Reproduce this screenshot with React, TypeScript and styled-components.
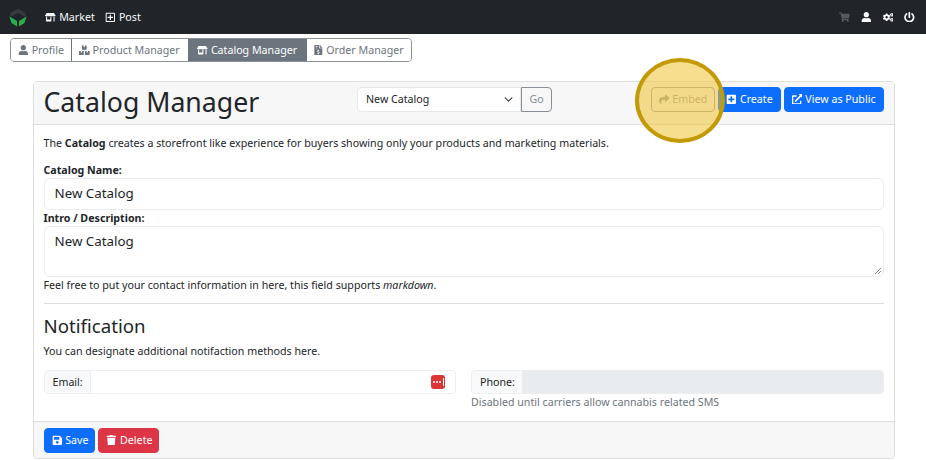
import styled, { createGlobalStyle } from "styled-components";
import {
  FaBoxes,
  FaCogs,
  FaExternalLinkAlt,
  FaFileInvoiceDollar,
  FaPlusSquare,
  FaPowerOff,
  FaRegPlusSquare,
  FaSave,
  FaShare,
  FaShoppingCart,
  FaStoreAlt,
  FaTrash,
  FaUser,
} from "react-icons/fa";

const GlobalStyle = createGlobalStyle`
  * { box-sizing: border-box; }
  html, body { margin: 0; background: #fff; }
  body {
    font-family: "Noto Sans", sans-serif;
    font-size: 10.67px;
    line-height: 16px;
    color: #212529;
  }
  svg.fa { height: 10.67px; width: auto; display: block; flex: none; }
`;

const Page = styled.div`
  width: 926px;
  height: 460px;
  overflow: hidden;
  position: relative;
`;

const NavBar = styled.nav`
  display: flex;
  align-items: center;
  height: 34px;
  background: #212529;
  padding: 0 11px 0 9px;
  color: #f8f9fa;
`;

const NavLink = styled.span`
  display: inline-flex;
  align-items: center;
  gap: 3.5px;
  margin-right: 10px;
`;

const Logo = styled.svg`
  width: 18px;
  height: 19px;
  margin-right: 18px;
`;

const NavRight = styled.div`
  margin-left: auto;
  display: flex;
  align-items: center;
  gap: 11px;
`;

const Tabs = styled.div`
  display: inline-flex;
  margin: 4px 0 0 10px;
  height: 24px;
  border: 1px solid #8a9198;
  border-radius: 4px;
  overflow: hidden;
`;

const Tab = styled.span<{ $active?: boolean }>`
  display: inline-flex;
  align-items: center;
  gap: 3px;
  padding: ${(p) => (p.$active ? "0 8.5px" : "0 8px 0 7px")};
  color: ${(p) => (p.$active ? "#fff" : "#6c757d")};
  background: ${(p) => (p.$active ? "#6c757d" : "#fff")};
  & + & { border-left: 1px solid #6c757d; }
  &:first-child { padding-right: 7px; }
  &:last-child { padding: 0 7px 0 6px; }
`;

const Card = styled.section`
  display: flex;
  flex-direction: column;
  width: 862px;
  height: 378px;
  margin: 19px 0 0 32.5px;
  border: 1px solid #dfdfdf;
  border-radius: 4px;
  overflow: hidden;
`;

const CardHeader = styled.header`
  display: flex;
  align-items: center;
  height: 43px;
  flex: none;
  padding: 0 10px;
  background: #f7f7f7;
  border-bottom: 1px solid #dfdfdf;
`;

const Title = styled.h1`
  margin: -2px 0 0;
  width: 313.5px;
  font-size: 26.67px;
  font-weight: 400;
  line-height: 32px;
  color: #212529;
`;

const CatalogPicker = styled.div`
  display: flex;
  height: 25px;
  margin-top: -8px;
`;

const PickerSelect = styled.div`
  display: flex;
  align-items: center;
  justify-content: space-between;
  width: 164px;
  padding: 0 7px 0 8px;
  background: #fff;
  border: 1px solid #e6e8ea;
  border-radius: 4px 0 0 4px;
  svg { width: 9px; height: 9px; }
`;

const GoButton = styled.span`
  display: flex;
  align-items: center;
  justify-content: center;
  width: 31px;
  border: 1px solid #6c757d;
  border-radius: 0 4px 4px 0;
  color: #6c757d;
  opacity: 0.8;
`;

const HeaderActions = styled.div`
  display: flex;
  gap: 3px;
  margin-left: auto;
  margin-top: -8px;
`;

const Button = styled.span<{ $tone: "primary" | "danger" | "muted" }>`
  display: inline-flex;
  align-items: center;
  gap: 3px;
  height: 25px;
  padding: 0 7px;
  border-radius: 4px;
  border: 1px solid
    ${(p) =>
      p.$tone === "primary" ? "#0d6efd" : p.$tone === "danger" ? "#dc3545" : "#6c757d"};
  background: ${(p) =>
    p.$tone === "primary" ? "#0d6efd" : p.$tone === "danger" ? "#dc3545" : "transparent"};
  color: ${(p) => (p.$tone === "muted" ? "#6c757d" : "#fff")};
  opacity: ${(p) => (p.$tone === "muted" ? 0.65 : 1)};
`;

const CardBody = styled.div`
  flex: 1;
  padding: 10px 10px 0;
`;

const Intro = styled.p`
  margin: 0 0 11px;
`;

const Label = styled.div`
  font-weight: 700;
`;

const TextField = styled.div<{ $tall?: boolean }>`
  height: ${(p) => (p.$tall ? "51px" : "32px")};
  padding: ${(p) => (p.$tall ? "4px 10px" : "0 10px 2px")};
  display: flex;
  align-items: ${(p) => (p.$tall ? "flex-start" : "center")};
  font-size: 13.33px;
  line-height: 20px;
  border: 1px solid #e9ebec;
  border-radius: 6px;
  position: relative;
`;

const ResizeGrip = styled.svg`
  position: absolute;
  right: 1px;
  bottom: 1px;
  width: 8px;
  height: 8px;
`;

const Hint = styled.p`
  margin: 0;
`;

const Divider = styled.hr`
  border: 0;
  border-top: 1px solid #dcdddd;
  margin: 10px 0 11px;
`;

const Heading = styled.h2`
  margin: 0 0 6px;
  font-size: 18.67px;
  font-weight: 400;
  line-height: 22px;
`;

const FieldRow = styled.div`
  display: grid;
  grid-template-columns: 1fr 1fr;
  gap: 15px;
  margin-top: 11px;
`;

const InputGroup = styled.div`
  display: flex;
  height: 24px;
  border: 1px solid #eceeef;
  border-radius: 4px;
  overflow: hidden;
`;

const GroupLabel = styled.span`
  display: flex;
  align-items: center;
  padding: 0 7px 0 8px;
  background: #f8f9fa;
  border-right: 1px solid #eceeef;
`;

const GroupInput = styled.div<{ $disabled?: boolean }>`
  flex: 1;
  display: flex;
  align-items: center;
  justify-content: flex-end;
  padding-right: 10px;
  background: ${(p) => (p.$disabled ? "#e9ecef" : "#fff")};
`;

const PasswordBadge = styled.span`
  display: flex;
  align-items: center;
  justify-content: center;
  gap: 1px;
  width: 14px;
  height: 14px;
  background: #dc3535;
  border-radius: 3px;
  i {
    width: 2px;
    height: 2px;
    border-radius: 50%;
    background: #fff;
  }
  b {
    width: 1px;
    height: 8px;
    margin-left: 1px;
    background: #fff;
  }
`;

const MutedText = styled.div`
  color: #6c757d;
`;

const CardFooter = styled.footer`
  display: flex;
  align-items: center;
  gap: 3px;
  height: 37px;
  flex: none;
  padding: 0 10px;
  background: #f7f7f7;
  border-top: 1px solid #dfdfdf;
  ${Button} { padding-right: 6px; }
`;

const Highlight = styled.div`
  position: absolute;
  left: 635px;
  top: 58px;
  width: 90px;
  height: 85px;
  border-radius: 50%;
  border: 4px solid #c29a08;
  background: rgba(240, 195, 50, 0.55);
`;

const App = () => {
  return (
    <Page>
      <GlobalStyle />
      <NavBar>
        <Logo viewBox="0 0 36 38">
          <path d="M18 1 33 10v8l-15-8-15 8v-8z" fill="#353a40" />
          <path d="M1 17l15 9v11L5 30z" fill="#27b04b" />
          <path d="M35 17l-15 9v11l11-7z" fill="#27b04b" />
        </Logo>
        <NavLink>
          <FaStoreAlt className="fa" /> Market
        </NavLink>
        <NavLink>
          <FaRegPlusSquare className="fa" /> Post
        </NavLink>
        <NavRight>
          <FaShoppingCart className="fa" color="#555a5f" />
          <FaUser className="fa" color="#fff" />
          <FaCogs className="fa" color="#fff" />
          <FaPowerOff className="fa" color="#fff" />
        </NavRight>
      </NavBar>

      <Tabs>
        <Tab>
          <FaUser className="fa" /> Profile
        </Tab>
        <Tab>
          <FaBoxes className="fa" /> Product Manager
        </Tab>
        <Tab $active>
          <FaStoreAlt className="fa" /> Catalog Manager
        </Tab>
        <Tab>
          <FaFileInvoiceDollar className="fa" /> Order Manager
        </Tab>
      </Tabs>

      <Card>
        <CardHeader>
          <Title>Catalog Manager</Title>
          <CatalogPicker>
            <PickerSelect>
              New Catalog
              <svg viewBox="0 0 16 16">
                <path d="m2 5 6 6 6-6" fill="none" stroke="#343a40" strokeWidth="2" strokeLinecap="round" strokeLinejoin="round" />
              </svg>
            </PickerSelect>
            <GoButton>Go</GoButton>
          </CatalogPicker>
          <HeaderActions>
            <Button $tone="muted">
              <FaShare className="fa" /> Embed
            </Button>
            <Button $tone="primary">
              <FaPlusSquare className="fa" /> Create
            </Button>
            <Button $tone="primary">
              <FaExternalLinkAlt className="fa" /> View as Public
            </Button>
          </HeaderActions>
        </CardHeader>

        <CardBody>
          <Intro>
            The <b>Catalog</b> creates a storefront like experience for buyers showing only your products and marketing materials.
          </Intro>
          <Label>Catalog Name:</Label>
          <TextField>New Catalog</TextField>
          <Label>Intro / Description:</Label>
          <TextField $tall>
            New Catalog
            <ResizeGrip viewBox="0 0 8 8">
              <path d="M7 1 1 7M7 4 4 7" stroke="#666" strokeWidth="0.8" />
            </ResizeGrip>
          </TextField>
          <Hint>
            Feel free to put your contact information in here, this field supports <em>markdown</em>.
          </Hint>
          <Divider />
          <Heading>Notification</Heading>
          <Hint>You can designate additional notifaction methods here.</Hint>
          <FieldRow>
            <div>
              <InputGroup>
                <GroupLabel>Email:</GroupLabel>
                <GroupInput>
                  <PasswordBadge>
                    <i />
                    <i />
                    <i />
                    <b />
                  </PasswordBadge>
                </GroupInput>
              </InputGroup>
            </div>
            <div>
              <InputGroup>
                <GroupLabel>Phone:</GroupLabel>
                <GroupInput $disabled />
              </InputGroup>
              <MutedText>Disabled until carriers allow cannabis related SMS</MutedText>
            </div>
          </FieldRow>
        </CardBody>

        <CardFooter>
          <Button $tone="primary">
            <FaSave className="fa" /> Save
          </Button>
          <Button $tone="danger">
            <FaTrash className="fa" /> Delete
          </Button>
        </CardFooter>
      </Card>

      <Highlight />
    </Page>
  );
};

export default App;
